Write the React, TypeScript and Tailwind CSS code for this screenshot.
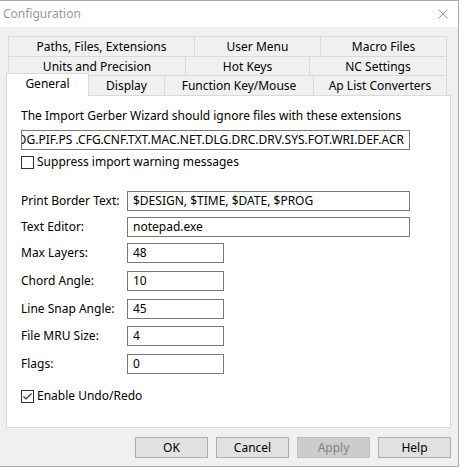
import React from "react";

const tabRows = [
  [
    { label: "Paths, Files, Extensions", w: "w-[187px] border-l" },
    { label: "User Menu", w: "w-[126px]" },
    { label: "Macro Files", w: "w-[126px]" },
  ],
  [
    { label: "Units and Precision", w: "w-[178px] border-l" },
    { label: "Hot Keys", w: "w-[124px]" },
    { label: "NC Settings", w: "w-[137px]" },
  ],
];

function CheckBox({ checked }: { checked?: boolean }) {
  return (
    <div className="w-[13px] h-[13px] border border-[#333333] bg-white flex items-center justify-center shrink-0">
      {checked && (
        <svg width="11" height="11" viewBox="0 0 11 11">
          <path d="M1.5 5.5 L4 8 L9.5 2.5" fill="none" stroke="#333333" strokeWidth="1.2" />
        </svg>
      )}
    </div>
  );
}

function Field({ label, value, wide, mt }: { label: string; value: string; wide?: boolean; mt: string }) {
  return (
    <div className={`flex items-center h-[20px] ${mt}`}>
      <div className="w-[106px] shrink-0">{label}</div>
      <div
        className={`h-[20px] border border-[#7a7a7a] bg-white flex items-center pl-[5px] ${
          wide ? "w-[283px]" : "w-[97px]"
        }`}
      >
        {value}
      </div>
    </div>
  );
}

export default function App() {
  return (
    <div className="w-[459px] h-[467px] border-t border-r border-b border-[#aaaaaa] bg-[#f0f0f0] flex flex-col text-[12px] text-black font-['Noto_Sans',sans-serif] leading-[16px]">
      {/* Title bar */}
      <div className="h-[26px] bg-white flex items-center justify-between pl-[3px] pr-[10px] shrink-0">
        <span className="text-[#999999]">Configuration</span>
        <svg width="10" height="10" viewBox="0 0 10 10">
          <path d="M0.5 0.5 L9.5 9.5 M9.5 0.5 L0.5 9.5" stroke="#999999" strokeWidth="1" />
        </svg>
      </div>

      <div className="px-[6px] pt-[9px] flex flex-col">
        {/* Tabs */}
        {tabRows.map((row, i) => (
          <div key={i} className="flex ml-[2px]">
            {row.map((t) => (
              <div
                key={t.label}
                className={`h-[20px] border-t border-r border-[#d9d9d9] flex items-center justify-center ${t.w}`}
              >
                {t.label}
              </div>
            ))}
          </div>
        ))}
        <div className="flex items-end h-[20px] relative z-10 -mb-px">
          <div className="w-[83px] h-[23px] -mt-[2px] bg-white border-l border-t border-r border-[#d9d9d9] flex items-center justify-center pb-[2px]">
            General
          </div>
          <div className="w-[76px] h-[21px] border-t border-r border-[#d9d9d9] flex items-center justify-center">
            Display
          </div>
          <div className="w-[149px] h-[21px] border-t border-r border-[#d9d9d9] flex items-center justify-center">
            Function Key/Mouse
          </div>
          <div className="w-[133px] h-[21px] border-t border-r border-[#d9d9d9] flex items-center justify-center">
            Ap List Converters
          </div>
        </div>

        {/* Panel */}
        <div className="w-[445px] h-[333px] bg-white border border-[#d9d9d9] pl-[14px] pt-[12px] flex flex-col">
          <div>The Import Gerber Wizard should ignore files with these extensions</div>
          <div className="mt-[6px] w-[389px] h-[20px] border border-[#7a7a7a] flex items-center justify-end overflow-hidden pr-[5px] whitespace-nowrap">
            .EXE.COM.BAT.LOG.PIF.PS .CFG.CNF.TXT.MAC.NET.DLG.DRC.DRV.SYS.FOT.WRI.DEF.ACR
          </div>
          <div className="mt-[4px] h-[16px] flex items-center gap-[3px]">
            <CheckBox />
            <span>Suppress import warning messages</span>
          </div>

          <Field mt="mt-[21px]" label="Print Border Text:" value="$DESIGN, $TIME, $DATE, $PROG" wide />
          <Field mt="mt-[6px]" label="Text Editor:" value="notepad.exe" wide />
          <Field mt="mt-[6px]" label="Max Layers:" value="48" />
          <Field mt="mt-[8px]" label="Chord Angle:" value="10" />
          <Field mt="mt-[8px]" label="Line Snap Angle:" value="45" />
          <Field mt="mt-[7px]" label="File MRU Size:" value="4" />
          <Field mt="mt-[8px]" label="Flags:" value="0" />

          <div className="mt-[14px] h-[16px] flex items-center gap-[3px]">
            <CheckBox checked />
            <span>Enable Undo/Redo</span>
          </div>
        </div>

        {/* Buttons */}
        <div className="mt-[9px] ml-[129px] flex gap-[8px]">
          {["OK", "Cancel", "Apply", "Help"].map((b) => (
            <div
              key={b}
              className={`w-[73px] h-[21px] border flex items-center justify-center ${
                b === "Apply"
                  ? "bg-[#cccccc] border-[#bfbfbf] text-[#838383]"
                  : "bg-[#e1e1e1] border-[#adadad]"
              }`}
            >
              {b}
            </div>
          ))}
        </div>
      </div>
    </div>
  );
}
